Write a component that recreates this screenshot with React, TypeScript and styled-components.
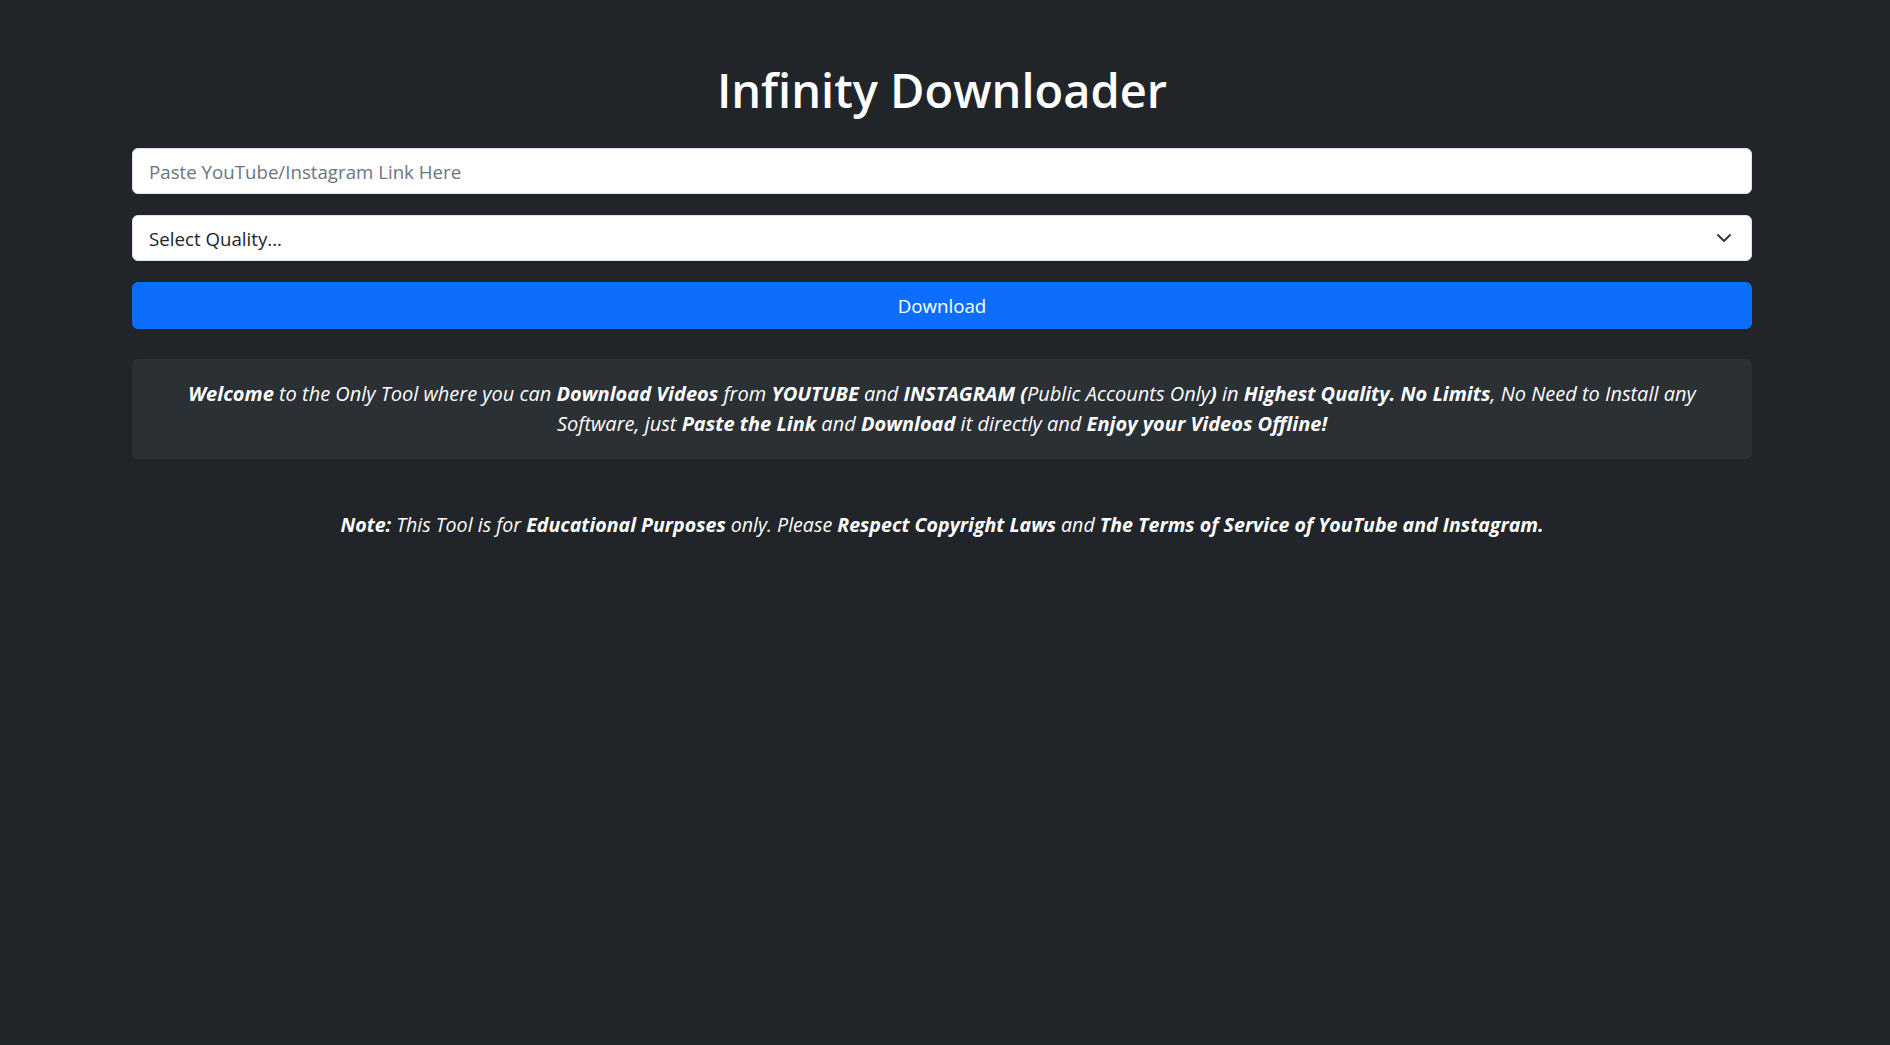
import React from 'react';
import styled, { createGlobalStyle } from 'styled-components';

const GlobalStyle = createGlobalStyle`
  html, body {
    margin: 0;
    padding: 0;
    background: #212529;
    color: #dee2e6;
    font-family: 'Open Sans', 'Noto Sans', sans-serif;
  }
  * { box-sizing: border-box; }
`;

const App = () => {
  return (
    <Wrapper>
      <GlobalStyle />
      <Container>
        <Title>Infinity Downloader</Title>
        <Form onSubmit={(e) => e.preventDefault()}>
          <Input type="text" placeholder="Paste YouTube/Instagram Link Here" />
          <SelectWrap>
            <Select defaultValue="">
              <option value="" disabled>
                Select Quality...
              </option>
              <option value="1080">1080p</option>
              <option value="720">720p</option>
              <option value="480">480p</option>
            </Select>
            <Chevron viewBox="0 0 16 16" aria-hidden="true">
              <path
                d="M2 5l6 6 6-6"
                fill="none"
                stroke="#343a40"
                strokeWidth="2"
                strokeLinecap="round"
                strokeLinejoin="round"
              />
            </Chevron>
          </SelectWrap>
          <DownloadBtn type="submit">Download</DownloadBtn>
        </Form>
        <InfoBox>
          <b>Welcome</b> to the Only Tool where you can <b>Download Videos</b> from{' '}
          <b>YOUTUBE</b> and <b>INSTAGRAM (</b>Public Accounts Only<b>)</b> in{' '}
          <b>Highest Quality. No Limits</b>, No Need to Install any
          <br />
          Software, just <b>Paste the Link</b> and <b>Download</b> it directly and{' '}
          <b>Enjoy your Videos Offline!</b>
        </InfoBox>
        <Note>
          <b>Note:</b> This Tool is for <b>Educational Purposes</b> only. Please{' '}
          <b>Respect Copyright Laws</b> and{' '}
          <b>The Terms of Service of YouTube and Instagram.</b>
        </Note>
      </Container>
    </Wrapper>
  );
};

export default App;

const Wrapper = styled.div`
  min-height: 1045px;
  background: #212529;
  padding-top: 62px;
`;

const Container = styled.div`
  width: 1620px;
  margin-left: 132px;
`;

const Title = styled.h1`
  margin: 0 0 30px;
  text-align: center;
  font-size: 47px;
  font-weight: 600;
  line-height: 1.2;
  color: #fff;
`;

const Form = styled.form`
  display: flex;
  flex-direction: column;
  gap: 21px;
`;

const fieldBase = `
  width: 100%;
  height: 46px;
  padding: 0 16px;
  font-family: 'Open Sans', 'Noto Sans', sans-serif;
  font-size: 18.7px;
  color: #212529;
  background: #fff;
  border: 1px solid #dee2e6;
  border-radius: 6px;
  outline: none;
`;

const Input = styled.input`
  ${fieldBase}
  &::placeholder {
    color: #6c757d;
  }
`;

const SelectWrap = styled.div`
  position: relative;
`;

const Select = styled.select`
  ${fieldBase}
  appearance: none;
  padding-right: 48px;
`;

const Chevron = styled.svg`
  position: absolute;
  right: 20px;
  top: 15px;
  width: 16px;
  height: 16px;
  pointer-events: none;
`;

const DownloadBtn = styled.button`
  width: 100%;
  height: 47px;
  font-family: 'Open Sans', 'Noto Sans', sans-serif;
  font-size: 18.7px;
  color: #fff;
  background: #0d6efd;
  border: 1px solid #0d6efd;
  border-radius: 6px;
  cursor: pointer;
`;

const InfoBox = styled.p`
  margin: 30px 0 0;
  padding: 20px 40px;
  background: #2b3035;
  border-radius: 6px;
  text-align: center;
  font-size: 20px;
  line-height: 30px;
  font-style: italic;
  color: #fff;

  b {
    font-weight: 700;
  }
`;

const Note = styled.p`
  margin: 51px 0 0;
  text-align: center;
  font-size: 19.6px;
  line-height: 30px;
  font-style: italic;
  color: #fff;

  b {
    font-weight: 700;
  }
`;
